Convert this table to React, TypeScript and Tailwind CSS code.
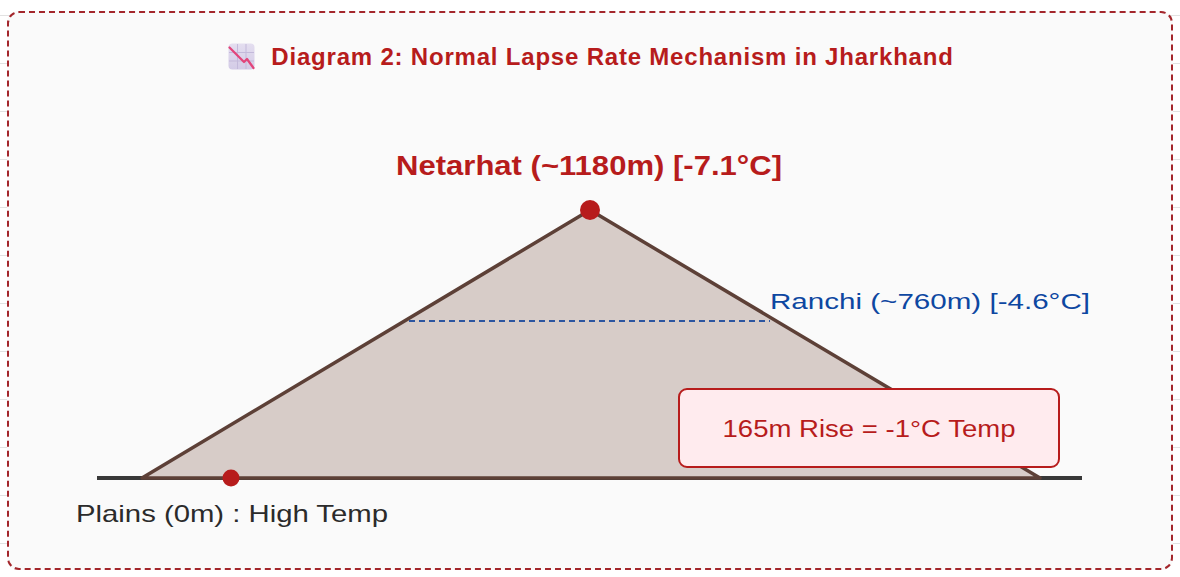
import React from 'react';

const hand = "font-['Liberation_Sans',Arial,sans-serif]";

const ChartDownIcon: React.FC = () => (
  <svg width="27" height="27" viewBox="0 0 27 27" aria-hidden="true">
    <defs>
      <linearGradient id="tile" x1="0" y1="0" x2="0" y2="1">
        <stop offset="0" stopColor="#e4def0" />
        <stop offset="1" stopColor="#d3cbe6" />
      </linearGradient>
    </defs>
    <rect x="0.5" y="0.5" width="26" height="26" rx="4" fill="url(#tile)" />
    <path d="M9.5 1v25M18 1v25M1 9.5h25M1 18h25" stroke="#c3b9da" strokeWidth="1" />
    <path d="M1.5 4.5L16 19l3-3L25.5 25" fill="none" stroke="#e2457a" strokeWidth="2.2" strokeLinecap="round" strokeLinejoin="round" />
  </svg>
);

const LapseDiagram: React.FC = () => (
  <svg width="1162" height="454" viewBox="9 100 1162 454" className="block">
    <line x1="97" y1="478" x2="1082" y2="478" stroke="#383838" strokeWidth="4" />
    <polygon points="142,478 590,210 1040,478" fill="#d7ccc8" stroke="#5d4037" strokeWidth="3.5" strokeLinejoin="round" />
    <line x1="409" y1="321" x2="770" y2="321" stroke="#2c55a0" strokeWidth="2" strokeDasharray="6 4" />
    <circle cx="590" cy="210" r="10" fill="#b71c1c" />
    <circle cx="231" cy="478" r="8.5" fill="#b71c1c" />

    <text x="589" y="175" textAnchor="middle" fontSize="28" fontWeight="700" fill="#b71c1c" textLength="386" lengthAdjust="spacingAndGlyphs" className={hand}>
      Netarhat (~1180m) [-7.1°C]
    </text>
    <text x="770" y="309" fontSize="22" fill="#0d47a1" textLength="320" lengthAdjust="spacingAndGlyphs" className={hand}>
      Ranchi (~760m) [-4.6°C]
    </text>

    <rect x="679" y="389" width="380" height="78" rx="8" fill="#ffebee" stroke="#b71c1c" strokeWidth="2" />
    <text x="869" y="437" textAnchor="middle" fontSize="23" fill="#b71c1c" textLength="293" lengthAdjust="spacingAndGlyphs" className={hand}>
      165m Rise = -1°C Temp
    </text>

    <text x="76" y="522" fontSize="24" fill="#2b2b2b" textLength="312" lengthAdjust="spacingAndGlyphs" className={hand}>
      Plains (0m) : High Temp
    </text>
  </svg>
);

const App: React.FC = () => (
  <div className="w-[1180px] h-[577px] overflow-hidden bg-white bg-[linear-gradient(#e2e2e2_1px,transparent_1px)] bg-[size:100%_48px] bg-[position:0_15px] pt-[11px] px-[7px]">
    <div className="w-[1166px] h-[559px] rounded-xl border-2 border-dashed border-[#a3262b] bg-[#fafafa] overflow-hidden">
      <div className="h-[87px] flex items-center justify-center gap-[16px] pl-[2px]">
        <ChartDownIcon />
        <h2 className={`text-[24px] font-bold text-[#b71c1c] tracking-[0.8px] ${hand}`}>
          Diagram 2: Normal Lapse Rate Mechanism in Jharkhand
        </h2>
      </div>
      <LapseDiagram />
    </div>
  </div>
);

export default App;
